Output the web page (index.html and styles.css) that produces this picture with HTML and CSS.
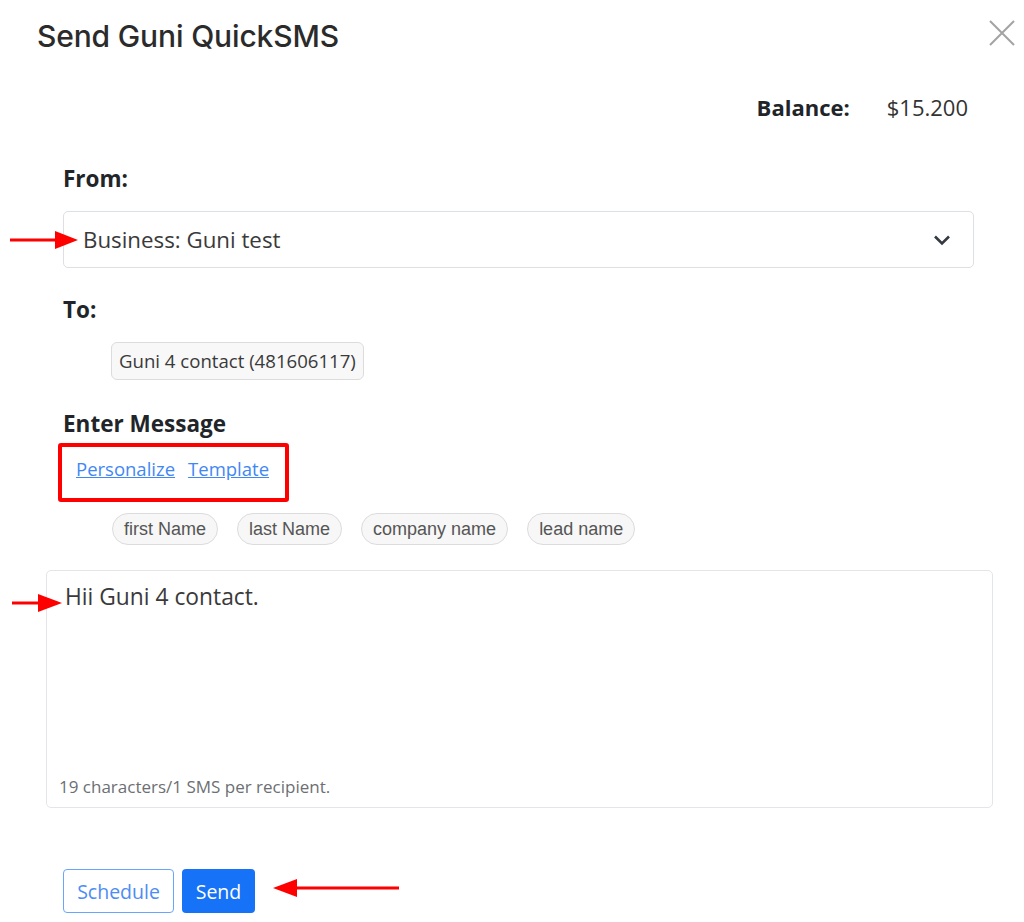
FILE: index.html
```html
<!DOCTYPE html>
<html lang="en">
<head>
    <meta charset="UTF-8">
    <meta name="viewport" content="width=device-width, initial-scale=1.0">
    <title>Send Guni QuickSMS</title>
    <link rel="stylesheet" href="styles.css">
</head>
<body>
    <div class="dialog">
        <header class="dialog-head">
            <h1>Send Guni QuickSMS</h1>
            <button class="close" aria-label="Close">
                <svg width="26" height="26" viewBox="0 0 26 26"><path d="M1 1L25 25M25 1L1 25" stroke="#a3a3a3" stroke-width="2" fill="none"/></svg>
            </button>
        </header>

        <div class="dialog-body">
            <div class="balance">
                <strong>Balance:</strong>
                <span>$15.200</span>
            </div>

            <div class="field">
                <label>From:</label>
                <div class="select">
                    <span>Business: Guni test</span>
                    <svg width="18" height="12" viewBox="0 0 18 12"><path d="M2 2.5L9 9.5L16 2.5" stroke="#343a40" stroke-width="2.6" fill="none"/></svg>
                </div>
            </div>

            <div class="field">
                <label class="to-label">To:</label>
                <div class="recipients">
                    <span class="chip">Guni 4 contact (481606117)</span>
                </div>
            </div>

            <div class="field">
                <label class="msg-label">Enter Message</label>
                <div class="msg-tools">
                    <a href="#">Personalize</a>
                    <a href="#">Template</a>
                </div>
                <div class="tags">
                    <span class="tag">first Name</span>
                    <span class="tag">last Name</span>
                    <span class="tag">company name</span>
                    <span class="tag">lead name</span>
                </div>
            </div>

            <div class="message-box">
                <p>Hii Guni 4 contact.</p>
                <small>19 characters/1 SMS per recipient.</small>
            </div>

            <div class="actions">
                <button class="btn btn-outline">Schedule</button>
                <button class="btn btn-primary">Send</button>
            </div>
        </div>

        <!-- annotation arrows -->
        <svg class="arrow arrow-from" width="70" height="20" viewBox="0 0 70 20"><path d="M0 10H50" stroke="#f00" stroke-width="3"/><path d="M45 1L68 10L45 19Z" fill="#f00"/></svg>
        <svg class="arrow arrow-msg" width="52" height="20" viewBox="0 0 52 20"><path d="M0 10H30" stroke="#f00" stroke-width="3"/><path d="M26 1L50 10L26 19Z" fill="#f00"/></svg>
        <svg class="arrow arrow-send" width="130" height="20" viewBox="0 0 130 20"><path d="M20 10H128" stroke="#f00" stroke-width="3"/><path d="M26 1L2 10L26 19Z" fill="#f00"/></svg>
    </div>
</body>
</html>
```

FILE: styles.css
```css
* {
    margin: 0;
    padding: 0;
    box-sizing: border-box;
}

body {
    font-family: "Open Sans", "Noto Sans", sans-serif;
    background-color: #fff;
    color: #212529;
}

.dialog {
    position: relative;
    width: 1024px;
    min-height: 922px;
}

.dialog-head {
    display: flex;
    justify-content: space-between;
    align-items: flex-start;
    padding: 18px 9px 0 37px;
}

.dialog-head h1 {
    font-family: Inter, "Open Sans", sans-serif;
    font-weight: 500;
    font-size: 30px;
    line-height: 36px;
    color: #2b2b2b;
    letter-spacing: -0.15px;
}

.close {
    background: none;
    border: none;
    margin-top: 2px;
    cursor: pointer;
}

.dialog-body {
    padding: 0 50px 0 63px;
}

.balance {
    display: flex;
    justify-content: flex-end;
    gap: 37px;
    margin-top: 38px;
    padding-right: 6px;
    font-size: 22px;
    line-height: 30px;
}

.balance strong {
    font-weight: 700;
}

.balance span {
    color: #333;
}

.field label {
    display: block;
    font-weight: 700;
    font-size: 22.5px;
    line-height: 30px;
    margin-top: 42px;
}

.field .to-label {
    margin-top: 27px;
}

.field .msg-label {
    margin-top: 29px;
}

.select {
    display: flex;
    justify-content: space-between;
    align-items: center;
    margin-top: 17px;
    height: 57px;
    padding: 0 22px 0 19px;
    border: 1px solid #dcdfe3;
    border-radius: 5px;
    font-size: 22.3px;
    line-height: 30px;
    color: #3a3a3a;
}

.recipients {
    margin-top: 17px;
    padding-left: 48px;
}

.chip {
    display: inline-block;
    height: 38px;
    padding: 0 7px;
    border: 1px solid #dcdcdc;
    border-radius: 6px;
    background-color: #f8f8f8;
    font-size: 18.6px;
    line-height: 36px;
    color: #3a3a3a;
}

.msg-tools {
    display: inline-flex;
    gap: 13px;
    margin: 4px 0 0 -5px;
    padding: 8px 16px 16px 14px;
    border: 4px solid #f00;
    border-radius: 3px;
}

.msg-tools a {
    color: #3f87f5;
    font-size: 18.5px;
    line-height: 27px;
    text-decoration: underline;
}

.tags {
    display: flex;
    gap: 19px;
    margin-top: 11px;
    padding-left: 49px;
}

.tag {
    height: 32px;
    padding: 0 11px;
    border: 1px solid #dcdcdc;
    border-radius: 16px;
    background-color: #f7f7f7;
    font-family: "Liberation Sans", Arial, sans-serif;
    font-size: 18px;
    line-height: 30px;
    color: #555;
}

.message-box {
    display: flex;
    flex-direction: column;
    justify-content: space-between;
    margin: 25px -19px 0 -17px;
    height: 238px;
    border: 1px solid #e3e5e8;
    border-radius: 5px;
    padding: 11px 12px 9px 18px;
}

.message-box p {
    font-size: 22.8px;
    line-height: 30px;
    color: #3a3a3a;
}

.message-box small {
    margin-left: -6px;
    font-size: 17px;
    line-height: 22px;
    color: #6c6f73;
}

.actions {
    display: flex;
    gap: 8px;
    margin-top: 61px;
}

.btn {
    height: 44px;
    border-radius: 4px;
    font-family: "Open Sans", sans-serif;
    font-size: 19.5px;
    cursor: pointer;
}

.btn-outline {
    width: 111px;
    background-color: #fff;
    border: 1.5px solid #6aa5fd;
    color: #4d8cf5;
}

.btn-primary {
    width: 73px;
    background-color: #1672f7;
    border: none;
    color: #fff;
}

.arrow {
    position: absolute;
}

.arrow-from {
    left: 10px;
    top: 230px;
}

.arrow-msg {
    left: 12px;
    top: 593px;
}

.arrow-send {
    left: 271px;
    top: 878px;
}
```
